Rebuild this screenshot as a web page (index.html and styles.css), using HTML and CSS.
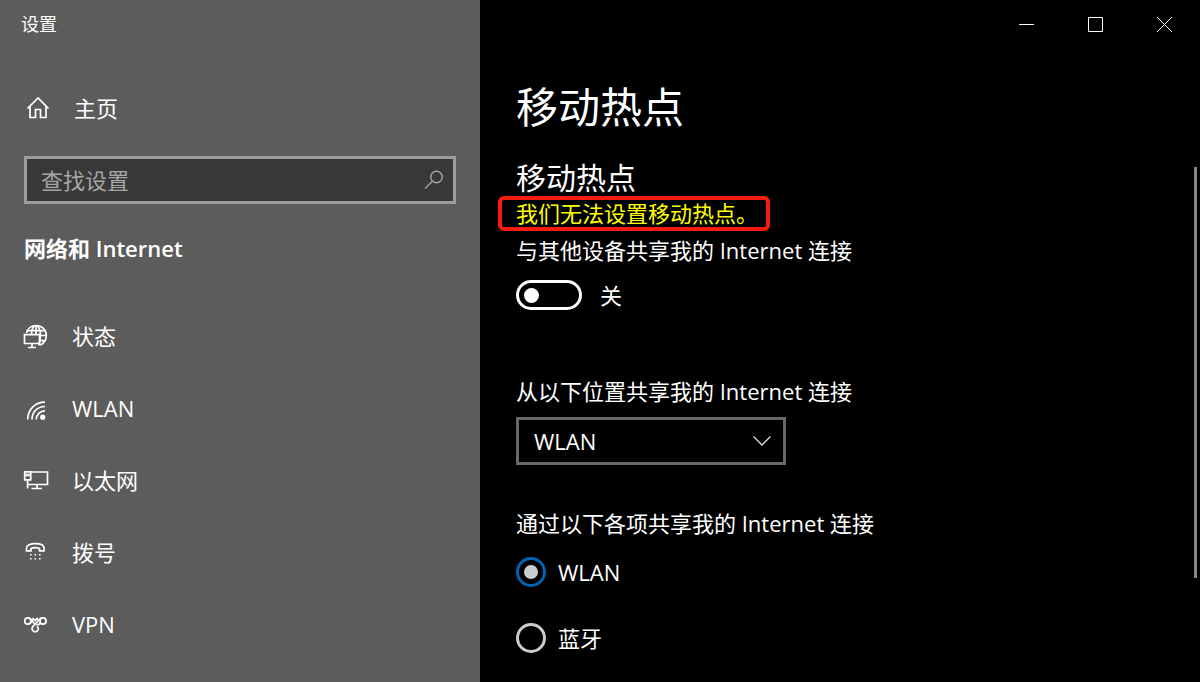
FILE: index.html
```html
<!DOCTYPE html>
<html lang="zh-CN">
<head>
<meta charset="utf-8">
<meta name="viewport" content="width=device-width, initial-scale=1">
<title>设置</title>
<link rel="stylesheet" href="styles.css">
</head>
<body>
<div class="window">
  <aside class="sidebar">
    <div class="app-title">设置</div>
    <a class="nav-link home" href="#home">
      <svg class="icon" viewBox="0 0 28 28" aria-hidden="true"><path d="M3.500 14.500 14 4l10.500 10.500M6 12.500V23.500h5.500v-8h5v8H22V12.500"/></svg>
      <span>主页</span>
    </a>
    <form class="search" role="search">
      <input class="search-input" type="search" placeholder="查找设置" aria-label="查找设置">
      <button class="search-button" type="button" aria-label="搜索">
        <svg class="search-icon" viewBox="0 0 20 20" aria-hidden="true"><circle cx="12.500" cy="7" r="5.800"/><path d="M8.300 11.200 1 18.500"/></svg>
      </button>
    </form>
    <h2 class="section-title">网络和 Internet</h2>
    <nav class="nav">
      <a class="nav-link" href="#status">
        <svg class="icon" viewBox="0 0 28 28" aria-hidden="true"><path d="M4.500 11C5.500 6.500 9.300 3.500 14 3.500c6 0 10.300 4.500 10.300 10 0 5-3 8.700-7.300 9.800M9.500 12C9.800 7.500 11.500 3.700 14 3.700s4.500 4.300 4.500 9.800c0 4-.5 6.500-2 9.300M5.500 8.700h17M14 3.500v9M18 13.500h6.300M18 18.700h5"/><path d="M2.500 12.700h15v8.800h-15zM10 21.500v4M6 25.500h8"/></svg>
        <span>状态</span>
      </a>
      <a class="nav-link" href="#wlan">
        <svg class="icon" viewBox="0 0 28 28" aria-hidden="true"><path d="M5.700 25.500C5.700 15.500 13 8.200 23 8.200M10 25.500c0-7.500 5.500-13 13-13M14.300 25.500c0-5 3.700-8.700 8.700-8.700"/><circle class="solid" cx="20.700" cy="23.200" r="2.600"/></svg>
        <span>WLAN</span>
      </a>
      <a class="nav-link" href="#ethernet">
        <svg class="icon" viewBox="0 0 28 28" aria-hidden="true"><path d="M8.500 6h17v12.500h-19M2.700 5.800h6v8h-6zM4.500 7.500v2h2.300v-2M5.600 13.800v8.700M15 18.500v3.800M9.500 22.500h10.500"/></svg>
        <span>以太网</span>
      </a>
      <a class="nav-link" href="#dialup">
        <svg class="icon" viewBox="0 0 28 28" aria-hidden="true"><path d="M4.500 12.800V10c0-2.700 4-4.300 8.800-4.300S22 7.300 22 10v2.800h-4.500V10.500c-2.500-1-6-1-8.500 0v2.300z"/><path class="solid" d="M8 16h1.600v1.600H8zM12.500 16h1.600v1.600h-1.600zM17 16h1.600v1.600H17zM8 20h1.600v1.600H8zM12.500 20h1.600v1.600h-1.600zM17 20h1.600v1.600H17z"/></svg>
        <span>拨号</span>
      </a>
      <a class="nav-link" href="#vpn">
        <svg class="icon" viewBox="0 0 28 28" aria-hidden="true"><circle cx="5.800" cy="11" r="3.100"/><circle cx="21" cy="11" r="3.100"/><path d="M7 8.200c2.300.3 3.300 3.600 5.500 5.500M8 13.200c1.700-.8 2.300-3 3.700-4M10.500 8l2.700 2.500L16 8M19.700 8.200c-2.700.3-4.500 4.300-8 7.500-1.600 1.400-2 2.800-1.400 4.200 1 2.500 4.800 2.500 5.800 0 .5-1.400 0-2.700-1.300-3.500M18.800 13.200c-1.300 1.400-2.600 1.700-4.300 1.700"/></svg>
        <span>VPN</span>
      </a>
    </nav>
  </aside>

  <main class="main">
    <div class="caption-buttons">
      <button class="caption-button" type="button" aria-label="最小化"><svg viewBox="0 0 15 15" aria-hidden="true"><path d="M0 7.500h15"/></svg></button>
      <button class="caption-button" type="button" aria-label="最大化"><svg viewBox="0 0 15 15" aria-hidden="true"><path d="M.5.500h14v14H.5z"/></svg></button>
      <button class="caption-button" type="button" aria-label="关闭"><svg viewBox="0 0 15 15" aria-hidden="true"><path d="m0 0 15 15M15 0 0 15"/></svg></button>
    </div>
    <div class="content">
      <h1 class="page-title">移动热点</h1>
      <h2 class="group-title">移动热点</h2>
      <p class="alert" role="alert">我们无法设置移动热点。</p>
      <label class="label" for="share">与其他设备共享我的 Internet 连接</label>
      <div class="toggle-row">
        <input class="toggle" type="checkbox" role="switch" id="share">
        <span>关</span>
      </div>
      <label class="label" for="source">从以下位置共享我的 Internet 连接</label>
      <div class="select-box">
        <select class="select" id="source"><option>WLAN</option></select>
        <svg class="chevron" viewBox="0 0 18 10" aria-hidden="true"><path d="m.5.500 8.500 8.500L17.500.500"/></svg>
      </div>
      <fieldset class="radio-group">
        <legend class="label">通过以下各项共享我的 Internet 连接</legend>
        <label class="radio-row"><input class="radio" type="radio" name="via" checked><span>WLAN</span></label>
        <label class="radio-row"><input class="radio" type="radio" name="via"><span>蓝牙</span></label>
      </fieldset>
    </div>
    <div class="scroll-thumb"></div>
  </main>
</div>
</body>
</html>
```

FILE: styles.css
```css
* {
  box-sizing: border-box;
}

body {
  margin: 0;
  background: #000;
  color: #fff;
  font-family: "Open Sans", "Noto Sans CJK SC", sans-serif;
  font-size: 22px;
  line-height: 32px;
}

h1, h2, p {
  margin: 0;
}

button, input, select {
  font: inherit;
  color: inherit;
  margin: 0;
}

svg {
  fill: none;
  stroke: currentColor;
}

.window {
  display: flex;
  min-height: 100vh;
}

/* Sidebar */

.sidebar {
  flex: 0 0 40%;
  background: #5c5c5c;
}

.app-title {
  padding: 12px 21px;
  font-size: 18px;
  line-height: 24px;
}

.nav-link {
  display: flex;
  align-items: center;
  gap: 22px;
  height: 72px;
  padding: 0 22px;
  color: inherit;
  text-decoration: none;
}

.home {
  margin: 24px 0 12px;
  padding-left: 24px;
}

.icon {
  width: 28px;
  height: 28px;
  stroke-width: 1.7;
}

.solid {
  fill: currentColor;
  stroke: none;
}

.search {
  display: flex;
  height: 48px;
  margin: 0 24px;
  border: 3px solid #9d9d9d;
  background: #383838;
  color: #a6a6a6;
}

.search-input {
  flex: 1;
  min-width: 0;
  padding: 0 14px;
  border: 0;
  background: none;
  outline: 0;
}

.search-input::placeholder {
  color: #a6a6a6;
  opacity: 1;
}

.search-button {
  display: grid;
  place-items: center;
  width: 38px;
  padding: 0;
  border: 0;
  background: none;
}

.search-icon {
  width: 20px;
  height: 20px;
  stroke-width: 1.4;
}

.section-title {
  padding: 28px 24px 36px;
  font-size: 22px;
  font-weight: 600;
}

/* Content pane */

.main {
  position: relative;
  flex: 1;
}

.caption-buttons {
  display: flex;
  justify-content: flex-end;
  padding-right: 1px;
}

.caption-button {
  display: grid;
  place-items: center;
  width: 69px;
  height: 49px;
  padding: 0;
  border: 0;
  background: none;
}

.caption-button svg {
  width: 15px;
  height: 15px;
}

.content {
  padding: 30px 36px 0;
}

.page-title {
  font-size: 42px;
  font-weight: 400;
  line-height: 56px;
}

.group-title {
  margin-top: 23px;
  font-size: 30px;
  font-weight: 400;
  line-height: 40px;
}

.alert {
  width: fit-content;
  margin: -2px -18px 3px;
  padding: 0 8px 0 14px;
  border: 4px solid #f81c10;
  border-radius: 6px;
  color: #ff0;
  line-height: 27px;
}

.label {
  display: block;
  padding: 0;
}

.toggle-row {
  display: flex;
  align-items: center;
  gap: 18px;
  margin: 13px 0 64px;
}

.toggle {
  appearance: none;
  display: flex;
  align-items: center;
  width: 66px;
  height: 30px;
  padding: 0 5px;
  border: 3px solid #fff;
  border-radius: 15px;
}

.toggle::before {
  content: "";
  width: 15px;
  height: 15px;
  border-radius: 50%;
  background: #fff;
}

.toggle:checked {
  justify-content: flex-end;
}

.select-box {
  position: relative;
  width: 270px;
  margin: 10px 0 42px;
}

.select {
  appearance: none;
  display: block;
  width: 100%;
  height: 48px;
  padding: 0 15px;
  border: 3px solid #686868;
  border-radius: 0;
  background: #000;
}

.chevron {
  position: absolute;
  top: 19px;
  right: 15px;
  width: 18px;
  height: 10px;
  color: #ddd;
  stroke-width: 1.3;
  pointer-events: none;
}

.radio-group {
  margin: 0;
  padding: 0;
  border: 0;
}

.radio-row {
  display: flex;
  align-items: center;
  gap: 12px;
  height: 66px;
}

.radio {
  appearance: none;
  display: grid;
  place-items: center;
  width: 30px;
  height: 30px;
  border: 3px solid #ccc;
  border-radius: 50%;
}

.radio:checked {
  border-color: #0063b1;
}

.radio:checked::before {
  content: "";
  width: 14px;
  height: 14px;
  border-radius: 50%;
  background: #ccc;
}

.scroll-thumb {
  position: absolute;
  top: 167px;
  right: 3px;
  bottom: 104px;
  width: 3px;
  background: #868686;
}
```
